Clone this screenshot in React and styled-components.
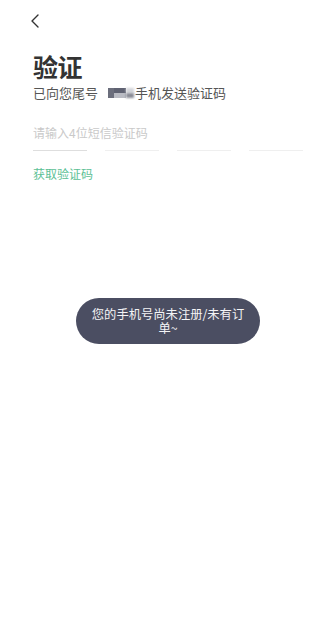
import React, { useState } from "react";
import styled, { createGlobalStyle } from "styled-components";

const GlobalStyle = createGlobalStyle`
  html, body {
    margin: 0;
    padding: 0;
    background: #ffffff;
  }
  body {
    font-family: "Noto Sans CJK SC", "Noto Sans", sans-serif;
    -webkit-font-smoothing: antialiased;
  }
  * {
    box-sizing: border-box;
  }
`;

const Page = styled.div`
  position: relative;
  width: 312px;
  min-height: 632px;
  background: #fff;
`;

const Header = styled.div`
  height: 42px;
  display: flex;
  align-items: center;
  padding-left: 29px;
`;

const BackButton = styled.button`
  border: none;
  background: none;
  padding: 0;
  width: 12px;
  height: 16px;
  display: flex;
  align-items: center;
  justify-content: center;
  cursor: pointer;
`;

const Content = styled.div`
  padding: 0 9px 0 33px;
`;

const Title = styled.h1`
  margin: 11px 0 0;
  font-size: 25px;
  line-height: 26px;
  font-weight: 600;
  color: #333;
  letter-spacing: -0.5px;
`;

const Subtitle = styled.p`
  margin: 6px 0 0;
  font-size: 13px;
  line-height: 16px;
  color: #555;
  display: flex;
  align-items: center;
`;

// blurred tail digits of the phone number
const Mosaic = styled.span`
  display: inline-grid;
  grid-template-columns: 6px 12px 8px;
  grid-template-rows: 5px 5px;
  margin: 0 1px 0 10px;
  height: 10px;
`;

const Cell = styled.span`
  background: ${(p) => p.$color};
  filter: blur(${(p) => p.$blur || 0.4}px);
`;

const CodeInput = styled.input`
  display: block;
  margin-top: 24px;
  width: 100%;
  height: 16px;
  padding: 0;
  border: none;
  outline: none;
  font-family: inherit;
  font-size: 12px;
  line-height: 16px;
  color: #333;
  background: transparent;

  &::placeholder {
    color: #c9c9c9;
  }
`;

const Lines = styled.div`
  margin-top: 9px;
  display: grid;
  grid-template-columns: repeat(4, 54px);
  column-gap: 18px;
`;

const Line = styled.div`
  height: 1px;
  background: ${(p) => (p.$active ? "#dedede" : "#efefef")};
`;

const ResendLink = styled.a`
  display: inline-block;
  margin-top: 15px;
  font-size: 12px;
  line-height: 16px;
  color: #5cbf95;
  text-decoration: none;
  cursor: pointer;
`;

const Toast = styled.div`
  position: absolute;
  top: 298px;
  left: 76px;
  width: 184px;
  height: 46px;
  padding: 0 15px;
  border-radius: 23px;
  background: #4b4e62;
  color: #f4f4f6;
  font-size: 12.3px;
  line-height: 14px;
  display: flex;
  align-items: center;
  justify-content: center;
  text-align: center;
`;

const BackIcon = () => (
  <svg width="10" height="14" viewBox="0 0 10 14">
    <path
      d="M8 1 L2 7 L8 13"
      fill="none"
      stroke="#333"
      strokeWidth="1.4"
      strokeLinecap="round"
      strokeLinejoin="round"
    />
  </svg>
);

const App = () => {
  const [code, setCode] = useState("");

  const handleChangeCode = (event) => {
    setCode(event.target.value.replace(/\D/g, "").slice(0, 4));
  };

  return (
    <Page>
      <GlobalStyle />
      <Header>
        <BackButton aria-label="返回">
          <BackIcon />
        </BackButton>
      </Header>

      <Content>
        <Title>验证</Title>
        <Subtitle>
          已向您尾号
          <Mosaic>
            <Cell $color="#6b6e7c" style={{ gridRow: "1 / 3" }} />
            <Cell $color="#5f6272" />
            <Cell $color="#d4d5da" $blur={0.8} />
            <Cell $color="#b9bbc3" />
            <Cell $color="#8a8c96" $blur={0.8} />
          </Mosaic>
          手机发送验证码
        </Subtitle>

        <CodeInput
          type="text"
          value={code}
          onChange={handleChangeCode}
          placeholder="请输入4位短信验证码"
        />
        <Lines>
          <Line $active />
          <Line />
          <Line />
          <Line />
        </Lines>

        <ResendLink>获取验证码</ResendLink>
      </Content>

      <Toast>您的手机号尚未注册/未有订单~</Toast>
    </Page>
  );
};

export default App;
